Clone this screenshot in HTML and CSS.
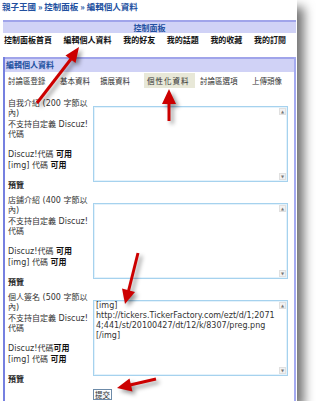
FILE: index.html
```html
<!DOCTYPE html>
<html>
<head>
    <meta charset="utf-8"/>
    <title>編輯個人資料</title>
    <link rel="stylesheet" href="styles.css">
</head>
<body>
<div class="page">
    <div class="crumb">親子王國 » 控制面板 » 編輯個人資料</div>
    <div class="panel">
        <div class="panel-head">控制面板</div>
        <ul class="menu">
            <li>控制面板首頁</li>
            <li class="on">編輯個人資料</li>
            <li>我的好友</li>
            <li>我的話題</li>
            <li>我的收藏</li>
            <li>我的訂閱</li>
        </ul>
    </div>
    <div class="box">
        <div class="box-head">編輯個人資料</div>
        <ul class="tabs">
            <li><span>討論區登錄</span></li>
            <li><span>基本資料</span></li>
            <li><span>擴展資料</span></li>
            <li><span class="current">個性化資料</span></li>
            <li><span>討論區選項</span></li>
            <li><span>上傳頭像</span></li>
        </ul>
        <div class="form">
            <div class="block">
                <div class="field">
                    <div class="label">自我介紹 (200 字節以內)<br>不支持自定義 Discuz! 代碼<br><br>Discuz!代碼 <b>可用</b><br>[img] 代碼 <b>可用</b></div>
                    <div class="area">
                        <textarea></textarea>
                        <span class="up">&#9650;</span>
                        <span class="down">&#9660;</span>
                    </div>
                </div>
                <div class="preview">預覽</div>
            </div>
            <div class="block">
                <div class="field">
                    <div class="label">店鋪介紹 (400 字節以內)<br>不支持自定義 Discuz! 代碼<br><br>Discuz!代碼 <b>可用</b><br>[img] 代碼 <b>可用</b></div>
                    <div class="area">
                        <textarea></textarea>
                        <span class="up">&#9650;</span>
                        <span class="down">&#9660;</span>
                    </div>
                </div>
                <div class="preview">預覽</div>
            </div>
            <div class="block">
                <div class="field">
                    <div class="label">個人簽名 (500 字節以內)<br>不支持自定義 Discuz! 代碼<br><br>Discuz!代碼<b>可用</b><br>[img] 代碼 <b>可用</b></div>
                    <div class="area">
<textarea>[img]
http://tickers.TickerFactory.com/ezt/d/1;2071
4;441/st/20100427/dt/12/k/8307/preg.png
[/img]</textarea>
                        <span class="up">&#9650;</span>
                        <span class="down">&#9660;</span>
                    </div>
                </div>
                <div class="preview">預覽</div>
            </div>
            <div class="submit"><button>提交</button></div>
        </div>
    </div>
    <!-- 紅色箭頭標註 -->
    <svg class="arrows" width="297" height="401" viewBox="0 0 297 401">
        <g class="arrow">
            <line x1="37" y1="103" x2="71" y2="59"/>
            <polygon points="79,47 75.5,63 65.5,55.5"/>
        </g>
        <g class="arrow">
            <line x1="169" y1="121" x2="169" y2="101"/>
            <polygon points="169,89 162,104 176,104"/>
        </g>
        <g class="arrow">
            <line x1="138" y1="253" x2="128.5" y2="291"/>
            <polygon points="125,304 135,292 122,288.5"/>
        </g>
        <g class="arrow">
            <line x1="156" y1="379" x2="130" y2="385"/>
            <polygon points="117,388 132.5,391.5 129.5,378.5"/>
        </g>
    </svg>
</div>
</body>
</html>
```

FILE: styles.css
```css
* {
    margin:0;
    padding:0;
    list-style: none;
    box-sizing: border-box;
}
body {
    background: #fff;
    font-family: "DejaVu Sans", "Noto Sans CJK TC", sans-serif;
    color: #333;
}
.page {
    position: relative;
    width: 297px;
    height: 401px;
    background: #fff;
    box-shadow: 7px 7px 10px rgba(0,0,0,.55);
    overflow: hidden;
}
.crumb {
    height: 20px;
    padding: 1px 0 0 2px;
    line-height: 10px;
    font-size: 8.5px;
    font-weight: bold;
    color: #2250a0;
    font-family: "Noto Sans CJK TC", sans-serif;
}
.panel {
    margin: 0 1px 0 3px;
}
.panel-head {
    height: 13px;
    border-top: 2px solid #a0a4ea;
    background: #d0d2f6;
    line-height: 11px;
    text-align: center;
    font-size: 8px;
    font-weight: bold;
    color: #2250a0;
    font-family: "Noto Sans CJK TC", sans-serif;
}
.menu {
    display: flex;
    justify-content: space-between;
    height: 13px;
    padding: 0 10px 0 1px;
    line-height: 13px;
    font-size: 8px;
    font-weight: bold;
    color: #111;
    font-family: "Noto Sans CJK TC", sans-serif;
}
.box {
    height: 344px;
    margin: 11px 1px 0 3px;
    border-left: 2px solid #7680e0;
    border-right: 2px solid #a4aaf0;
}
.box-head {
    height: 15px;
    border-top: 2px solid #a0a4ea;
    background: #d0d2f6;
    padding-left: 1px;
    line-height: 11px;
    font-size: 8px;
    font-weight: bold;
    color: #2250a0;
    font-family: "Noto Sans CJK TC", sans-serif;
}
.tabs {
    display: grid;
    grid-template-columns: 52px 40px 47px 53px 52px auto;
    height: 17px;
    padding-top: 1px;
    font-size: 7.5px;
    font-family: "Noto Sans CJK TC", sans-serif;
    color: #333;
}
.tabs span {
    display: inline-block;
    height: 15px;
    line-height: 15px;
    padding: 0 3px;
}
.tabs .current {
    padding: 0 5px 0 3px;
    letter-spacing: 1px;
    background: #e8e8d8;
}
.form {
    padding: 10px 0 0 3px;
}
.block + .block {
    margin-top: 8px;
}
.field {
    display: flex;
}
.label {
    width: 85px;
    font-size: 8px;
    line-height: 10.3px;
    color: #333;
}
.label b {
    color: #111;
}
.area {
    position: relative;
    width: 195px;
    height: 76px;
    margin-top: 7px;
}
.area textarea {
    display: block;
    width: 100%;
    height: 100%;
    resize: none;
    overflow: hidden;
    border: 1px solid #a6d2ee;
    box-shadow: inset 0 0 0 1px #e4f2fb;
    padding: 0 2px;
    font-family: "DejaVu Sans", sans-serif;
    font-size: 8px;
    line-height: 10px;
    color: #333;
    background: #fff;
}
.up, .down {
    position: absolute;
    right: 2px;
    width: 7px;
    height: 7px;
    background: #f2f2f2;
    border: 1px solid #e0e0e0;
    font-size: 4px;
    line-height: 5px;
    text-align: center;
    color: #777;
}
.up {
    top: 2px;
}
.down {
    bottom: 2px;
}
.preview {
    height: 6px;
    line-height: 6px;
    font-size: 8px;
    font-weight: bold;
    color: #222;
    font-family: "Noto Sans CJK TC", sans-serif;
}
.submit {
    padding: 7px 0 0 85px;
}
.submit button {
    display: block;
    width: 19px;
    height: 11px;
    border: 1px solid #6c8aa8;
    box-shadow: inset 0 0 0 1px #fff;
    background: #eef2f6;
    font-size: 7.5px;
    line-height: 9px;
    color: #333;
    font-family: "Noto Sans CJK TC", sans-serif;
}
.arrows {
    position: absolute;
    top: 0;
    left: 0;
    pointer-events: none;
    filter: drop-shadow(3px 3px 2px rgba(0,0,0,.4));
}
.arrow line {
    stroke: #cc0000;
    stroke-width: 3;
}
.arrow polygon {
    fill: #cc0000;
}
```
